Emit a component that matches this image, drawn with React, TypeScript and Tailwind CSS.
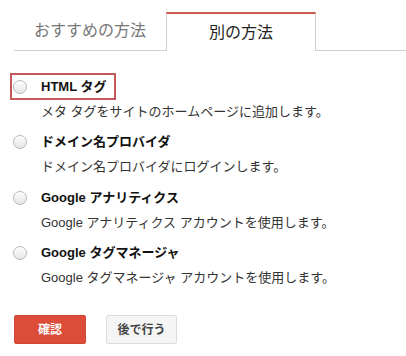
import React from "react";

interface Method {
  id: string;
  title: string;
  description: string;
}

const methods: Method[] = [
  { id: "html", title: "HTML タグ", description: "メタ タグをサイトのホームページに追加します。" },
  { id: "domain", title: "ドメイン名プロバイダ", description: "ドメイン名プロバイダにログインします。" },
  { id: "analytics", title: "Google アナリティクス", description: "Google アナリティクス アカウントを使用します。" },
  { id: "gtm", title: "Google タグマネージャ", description: "Google タグマネージャ アカウントを使用します。" },
];

const Radio: React.FC = () => (
  <span className="block w-[14px] h-[14px] rounded-full border border-[#b8b8b8] bg-gradient-to-b from-[#fdfdfd] to-[#e6e6e6] shadow-[inset_0_1px_1px_rgba(255,255,255,0.9)]" />
);

const App: React.FC = () => {
  return (
    <div
      className="w-[406px] h-[356px] bg-white text-[#222]"
      style={{ fontFamily: '"Liberation Sans", Arial, "Noto Sans CJK JP", sans-serif' }}
    >
      <div className="pt-[12px] pl-[14px]">
        <div className="flex border-b border-[#cfcfcf] h-[39px]">
          <div className="w-[152px] flex items-center justify-center text-[16px] text-[#777]">
            おすすめの方法
          </div>
          <div className="w-[150px] -mb-px bg-white border-t-2 border-t-[#d0574a] border-x border-x-[#cfcfcf] flex items-center justify-center text-[16px] text-[#222]">
            別の方法
          </div>
        </div>
      </div>

      <div className="pt-[22px] pl-[10px]">
        {methods.map((m, index) => (
          <div key={m.id} className="mb-[6px]">
            <div
              className={`inline-flex items-center h-[27px] pl-[1px] pr-[8px] border-2 ${
                index === 0 ? "border-[#c6585b]" : "border-transparent"
              }`}
            >
              <Radio />
              <span className="ml-[14px] text-[13px] font-bold text-[#111]">{m.title}</span>
            </div>
            <p className="ml-[31px] text-[13px] leading-[22px] text-[#333]">{m.description}</p>
          </div>
        ))}
      </div>

      <div className="flex gap-[20px] pl-[14px] pt-[20px]">
        <button className="w-[72px] h-[29px] rounded-[2px] bg-[#dd4b39] border border-[#d14836] text-white text-[12px] font-bold">
          確認
        </button>
        <button className="w-[71px] h-[29px] rounded-[2px] bg-[#f5f5f5] border border-[#dcdcdc] text-[#444] text-[12px] font-bold">
          後で行う
        </button>
      </div>
    </div>
  );
};

export default App;
